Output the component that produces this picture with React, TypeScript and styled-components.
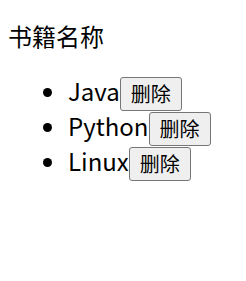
import React from "react";
import styled, { createGlobalStyle } from "styled-components";

const GlobalStyle = createGlobalStyle`
    body {
        margin: 8px;
        font-family: "Noto Sans CJK SC", "Noto Sans", sans-serif;
        color: #000;
        background: #fff;
    }
`;

const Title = styled.div`
    font-size: 24px;
    line-height: 32px;
    margin-top: 12px;
`;

const BookList = styled.ul`
    margin: 21px 0;
    padding-left: 60px;
    font-size: 24px;
`;

const BookItem = styled.li`
    height: 35px;
    line-height: 35px;
`;

const DeleteButton = styled.button`
    box-sizing: border-box;
    height: 34px;
    font-family: "Noto Sans CJK SC", sans-serif;
    font-size: 20px;
    line-height: 26px;
    padding: 0 10px;
    border: 1px solid #767676;
    border-radius: 3px;
    background: #efefef;
    color: #000;
    vertical-align: middle;
`;

const books = ["Java", "Python", "Linux"];

export default function App() {
    return (
        <>
            <GlobalStyle />
            <Title>书籍名称</Title>
            <BookList>
                {books.map((name, i) => (
                    <BookItem key={i}>
                        {name}
                        <DeleteButton>删除</DeleteButton>
                    </BookItem>
                ))}
            </BookList>
        </>
    );
}
